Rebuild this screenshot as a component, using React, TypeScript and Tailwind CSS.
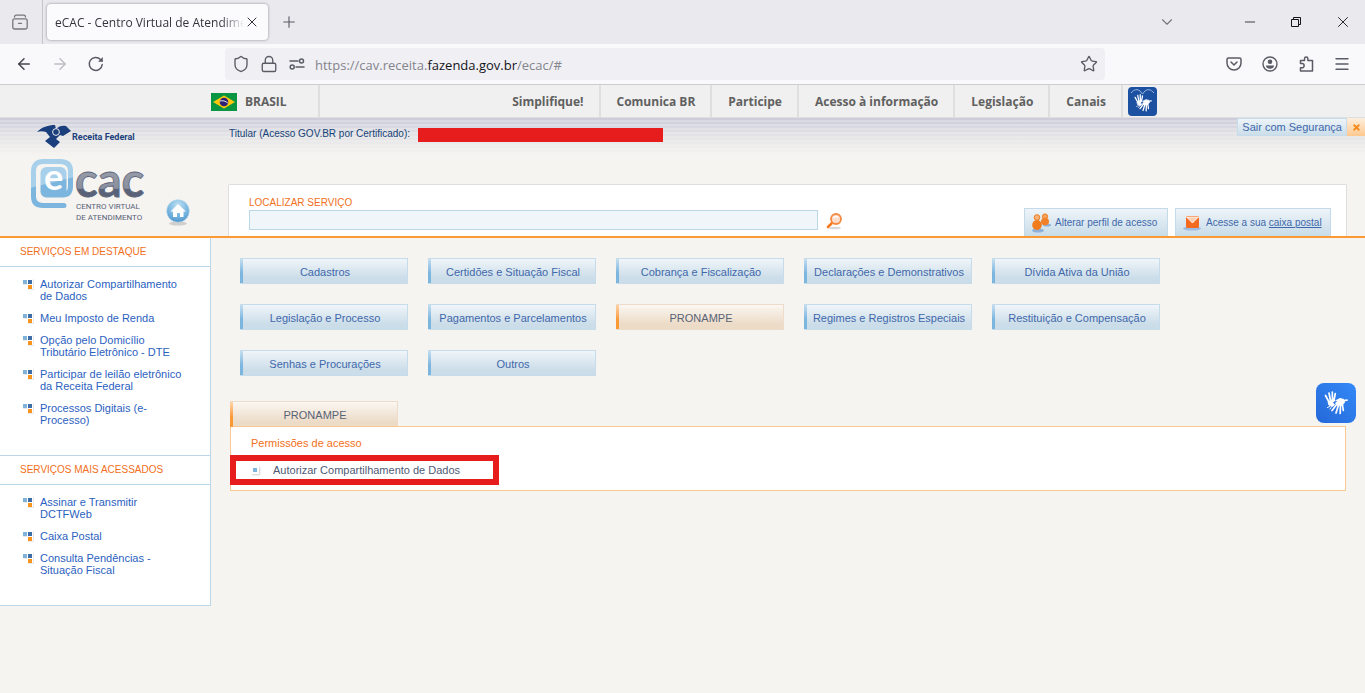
import {
  ArrowLeft,
  ArrowRight,
  ChevronDown,
  Lock,
  Menu,
  Minus,
  Plus,
  Shield,
  Star,
  X,
} from "lucide-react";

const govLinks = [
  "Simplifique!",
  "Comunica BR",
  "Participe",
  "Acesso à informação",
  "Legislação",
  "Canais",
];

const featured = [
  "Autorizar Compartilhamento de Dados",
  "Meu Imposto de Renda",
  "Opção pelo Domicílio Tributário Eletrônico - DTE",
  "Participar de leilão eletrônico da Receita Federal",
  "Processos Digitais (e-Processo)",
];

const mostUsed = [
  "Assinar e Transmitir DCTFWeb",
  "Caixa Postal",
  "Consulta Pendências - Situação Fiscal",
];

const categories = [
  "Cadastros",
  "Certidões e Situação Fiscal",
  "Cobrança e Fiscalização",
  "Declarações e Demonstrativos",
  "Dívida Ativa da União",
  "Legislação e Processo",
  "Pagamentos e Parcelamentos",
  "PRONAMPE",
  "Regimes e Registros Especiais",
  "Restituição e Compensação",
  "Senhas e Procurações",
  "Outros",
];

function LibrasHands({ className }: { className: string }) {
  return (
    <svg viewBox="0 0 24 24" className={className} fill="none" stroke="currentColor" strokeLinecap="round" strokeLinejoin="round">
      <path d="M4.500 10.500 10 8l.5 2-2 1.500 2 2.500-2.500 1.500L5 14z" fill="currentColor" strokeWidth="1" />
      <path d="M5 11 1.500 4.500M6.500 9.500 5 2M8.500 9 8.300 1M10 9.500l1.300-7" strokeWidth="1.700" />
      <path d="m12 9.500 4-2 4 1 .5 3-2.500 3-5-.5-1.500-2 3-1.500z" fill="currentColor" strokeWidth="1" />
      <path d="m20.500 9.500 2.500-.3M18.500 14l.8 5.500M16.500 14.500l-.3 8M14.500 14l-2.500 8M13 13l-5 6.500" strokeWidth="1.700" />
      <path d="m5.500 15.500-2 1M7 16.500l-1 1.500" strokeWidth="1" />
    </svg>
  );
}

function TabStrip() {
  return (
    <div className="flex h-11 items-center bg-[#eae9ee] text-[#5b5b66]">
      <div className="flex h-full w-[43px] items-center border-r border-[#c4c4ca] pl-3">
        <button aria-label="Firefox View">
          <svg viewBox="0 0 16 16" className="size-4 fill-none stroke-[#77777f] [stroke-width:1.3]" strokeLinecap="round">
            <path d="M2.500 3c0-1 .7-1.800 1.800-1.800h7.400c1.100 0 1.800.8 1.800 1.800M6.500 9.300h3" />
            <rect x=".8" y="4.800" width="14.400" height="10.200" rx="1.800" />
          </svg>
        </button>
      </div>
      <div className="ml-1 flex h-9 w-[221px] items-center rounded bg-[#fbfbfd] pl-2 pr-2 text-xs text-[#34343c] shadow-[0_0_3px_rgba(0,0,0,0.4)]">
        <span className="flex-1 overflow-hidden whitespace-nowrap pt-px [mask-image:linear-gradient(to_right,black_88%,transparent)]">
          eCAC - Centro Virtual de Atendimento
        </span>
        <button aria-label="Fechar aba">
          <X className="size-4" strokeWidth={1.5} />
        </button>
      </div>
      <button aria-label="Nova aba" className="ml-3">
        <Plus className="size-[18px]" strokeWidth={1.5} />
      </button>
      <div className="ml-auto flex items-center pr-[13px] text-[#15141a]">
        <button aria-label="Listar abas" className="mr-[66px] text-[#77777f]">
          <ChevronDown className="size-[18px]" strokeWidth={1.5} />
        </button>
        <button aria-label="Minimizar" className="mr-[30px]">
          <Minus className="size-4" strokeWidth={1.2} />
        </button>
        <button aria-label="Restaurar" className="mr-[30px]">
          <svg viewBox="0 0 16 16" className="size-4 fill-none stroke-current [stroke-width:1]">
            <path d="M3.500 5.500h7v7h-7zM5.500 5v-1.500h7v7H11" />
          </svg>
        </button>
        <button aria-label="Fechar">
          <X className="size-[18px]" strokeWidth={1.2} />
        </button>
      </div>
    </div>
  );
}

function Toolbar() {
  return (
    <div className="flex h-[41px] items-center border-b border-[#cccccf] bg-[#f9f9fb] pl-[15px] pr-[14px] text-[#5b5b66]">
      <button aria-label="Voltar" className="mr-[18px]">
        <ArrowLeft className="size-[18px] text-[#45454d]" strokeWidth={2} />
      </button>
      <button aria-label="Avançar" className="mr-[18px]">
        <ArrowRight className="size-[18px] text-[#bfbfc4]" strokeWidth={2} />
      </button>
      <button aria-label="Recarregar">
        <svg viewBox="0 0 18 18" className="size-[18px] fill-none stroke-[#5b5b66] [stroke-width:1.5]" strokeLinecap="round">
          <path d="M15.200 9.500A6.500 6.500 0 1 1 13.500 4.500l1.500 1.500" />
          <path d="M15.800 2v4.800H11z" fill="#5b5b66" stroke="none" />
        </svg>
      </button>
      <div className="ml-[120px] mr-[120px] flex h-8 flex-1 items-center rounded bg-[#f0f0f4] pl-[7px] pr-[7px]">
        <Shield className="size-[18px]" strokeWidth={1.8} />
        <Lock className="ml-[10px] size-[18px]" strokeWidth={1.8} />
        <svg viewBox="0 0 16 12" className="ml-[11px] h-3 w-4 fill-none stroke-current [stroke-width:1.5]" strokeLinecap="round">
          <path d="M1 3h8M7 9h8" />
          <circle cx="12.500" cy="3" r="2" />
          <circle cx="3.200" cy="9" r="2" />
        </svg>
        <span className="ml-[10px] flex-1 pt-[2px] text-[13px]/[18px] text-[#84848c]">
          https://cav.receita.<span className="text-[#15141a]">fazenda.gov.br</span>/ecac/#
        </span>
        <button aria-label="Favoritar">
          <Star className="size-[18px]" strokeWidth={1.8} />
        </button>
      </div>
      <div className="flex items-center gap-[18px]">
        <button aria-label="Pocket">
          <svg viewBox="0 0 18 18" className="size-[18px] fill-none stroke-current [stroke-width:1.5]" strokeLinecap="round" strokeLinejoin="round">
            <path d="M3.500 3h11a1.500 1.500 0 0 1 1.500 1.500V8A7 7 0 0 1 2 8V4.500A1.500 1.500 0 0 1 3.500 3z" />
            <path d="m6 7 3 3 3-3" />
          </svg>
        </button>
        <button aria-label="Conta">
          <svg viewBox="0 0 18 18" className="size-[18px]">
            <circle cx="9" cy="9" r="7" className="fill-none stroke-current [stroke-width:1.4]" />
            <circle cx="9" cy="6.800" r="2.300" fill="currentColor" />
            <path d="M4.800 10.500h8.400c-.3 2-2 3.300-4.200 3.300s-3.900-1.300-4.200-3.300z" fill="currentColor" />
          </svg>
        </button>
        <button aria-label="Extensões">
          <svg viewBox="0 0 18 18" className="size-[18px] fill-none stroke-current [stroke-width:1.5]" strokeLinejoin="round">
            <path d="M3.500 8.500V5.500h4V3.800a1.700 1.700 0 0 1 3.400 0v1.700H15.500V16H3.500v-3.200h1.500a2.100 2.100 0 0 0 0-4.300z" />
          </svg>
        </button>
        <button aria-label="Menu">
          <Menu className="size-[18px]" strokeWidth={1.8} />
        </button>
      </div>
    </div>
  );
}

function GovBar() {
  return (
    <div className="h-[33px] border-b border-[#dfdfdf] bg-[#f0f0f0] text-xs font-bold text-[#606060]">
      <div className="mx-auto flex h-full w-[949px] max-w-full items-center pl-[3px]">
        <a href="#" className="flex h-full w-[109px] items-center gap-2 border-r-2 border-[#dfdfdf] pt-px">
          <svg viewBox="0 0 26 18" className="h-[18px] w-[26px]">
            <rect width="26" height="18" fill="#0a9640" />
            <path d="M13 2.500 24 9l-11 6.500L2 9z" fill="#fdc70c" />
            <circle cx="13" cy="9" r="4.300" fill="#2b2275" />
            <path d="M9 8c3-.7 5.500 0 7.800 2" fill="none" stroke="#fff" strokeWidth=".9" />
          </svg>
          <span className="pt-px">BRASIL</span>
        </a>
        <nav className="ml-auto flex h-full">
          {govLinks.map((link) => (
            <a key={link} href="#" className="flex h-full items-center border-r-2 border-[#dfdfdf] pl-4 pr-[15px] pt-[2px]">
              {link}
            </a>
          ))}
        </nav>
        <a href="#" aria-label="VLibras" className="ml-[5px] flex size-[29px] flex-col items-center rounded bg-[#1c50a0] pt-px text-white">
          <svg viewBox="0 0 29 6" className="h-[6px] w-[29px] fill-none stroke-[#9db8de]">
            <path d="M3 5c3-4 7-4 9-2l2.500 3L17 3c2-2 6-2 9 2" />
          </svg>
          <LibrasHands className="size-[18px]" />
        </a>
      </div>
    </div>
  );
}

function Logo() {
  return (
    <div className="relative h-[118px] w-[228px] shrink-0">
      <svg viewBox="0 0 228 118" className="h-full w-full">
        <defs>
          <linearGradient id="gray" x1="0" y1="50" x2="0" y2="80" gradientUnits="userSpaceOnUse">
            <stop offset="0" stopColor="#9a9eaa" />
            <stop offset=".68" stopColor="#8a8f9e" />
            <stop offset=".7" stopColor="#596279" />
            <stop offset="1" stopColor="#596279" />
          </linearGradient>
          <linearGradient id="blue" x1="38" y1="42" x2="50" y2="90" gradientUnits="userSpaceOnUse">
            <stop offset="0" stopColor="#a9d0ea" />
            <stop offset=".5" stopColor="#a9d0ea" />
            <stop offset=".52" stopColor="#7cb5de" />
            <stop offset="1" stopColor="#7cb5de" />
          </linearGradient>
          <radialGradient id="ball" cx=".5" cy=".25" r=".8">
            <stop offset="0" stopColor="#bfe0f3" />
            <stop offset=".6" stopColor="#75b4df" />
            <stop offset="1" stopColor="#4c93c9" />
          </radialGradient>
        </defs>
        <path d="M37 14c5-5 11-7 18-7l1 4c3-3 6-4 10-3l5 5-8 5-3-1-4 4 4 3-6 6-9-7 5-4-4-5c-3-1-6-1-9 0z" fill="#1b3f7c" />
        <circle cx="56" cy="14" r="3.400" fill="#1b3f7c" stroke="#eeedf0" />
        <text x="72" y="22" fontSize="9" fontWeight="700" fill="#1b3f7c" fontFamily="Roboto, sans-serif">
          Receita Federal
        </text>
        <path d="M64 87.500H43c-6 0-9.500-3-9.500-9V53c0-6 3.500-9.500 9.500-9.500h17c7 0 10.500 3 10.500 9.500v15c0 6-3 9-8 9" fill="none" stroke="url(#blue)" strokeWidth="5" strokeLinecap="round" />
        <rect x="40.500" y="49" width="26" height="30.500" rx="6" fill="url(#blue)" />
        <text x="44" y="72" fontSize="36" fontWeight="700" fill="#fff" fontFamily="Lato, sans-serif">
          e
        </text>
        <text x="75" y="79" fontSize="47" fontWeight="700" fill="url(#gray)" stroke="#5f677c" strokeWidth=".8" fontFamily="Lato, sans-serif">
          cac
        </text>
        <g fontSize="8" fill="#596279" fontFamily="Roboto, sans-serif">
          <text x="76" y="91">CENTRO VIRTUAL</text>
          <text x="76" y="102">DE ATENDIMENTO</text>
        </g>
      </svg>
      <a href="#" aria-label="Início" className="absolute left-[166px] top-[81px]">
        <svg viewBox="0 0 26 28" className="h-7 w-[26px]">
          <ellipse cx="12" cy="24.500" rx="9" ry="2" fill="#000" opacity=".15" />
          <circle cx="12" cy="12" r="11.300" fill="url(#ball)" stroke="#b9d9ec" strokeWidth=".6" />
          <path d="m12 5-7.500 7.500H7V18h4v-4h3v4h3.500v-5.500H20z" fill="#fff" />
        </svg>
      </a>
    </div>
  );
}

function Header() {
  return (
    <header className="flex h-[120px] border-b-2 border-[#fb9a35] bg-[repeating-linear-gradient(to_bottom,rgba(246,244,240,0)_0px,rgba(246,244,240,0)_2px,rgba(246,244,240,0.3)_2px,rgba(246,244,240,0.3)_4px),linear-gradient(to_bottom,#cbcbda_0px,#e3e3e7_17px,#f5f4f1_38px)]">
      <Logo />
      <div className="flex min-w-0 flex-1 flex-col">
        <div className="flex h-[66px] items-start justify-between">
          <div className="mt-[9px] flex items-start text-[10px]/[13px] text-[#164377]">
            <span className="w-[190px] whitespace-nowrap pl-px">Titular (Acesso GOV.BR por Certificado):</span>
            <span className="mt-px h-[14px] w-[245px] bg-[#e71c1c]" />
          </div>
          <div className="flex h-[18px] items-stretch text-[11px] text-[#3f68aa]">
            <a href="#" className="flex items-center border border-[#c7dceb] bg-linear-to-b from-[#eef4f9] to-[#cbdeea] px-1">
              Sair com Segurança
            </a>
            <a href="#" aria-label="Sair" className="flex w-[18px] items-center justify-center bg-linear-to-b from-[#fdeedd] to-[#fdc98e] text-[#f68b1f]">
              <X className="size-[9px]" strokeWidth={5} />
            </a>
          </div>
        </div>
        <div className="mr-[18px] flex flex-1 items-end justify-between rounded-t-xs border border-b-0 border-[#dedede] bg-white pl-5 pr-[15px]">
          <form className="flex items-end pb-[6px]">
            <div className="flex flex-col">
              <label htmlFor="busca" className="text-[10px]/[14px] text-[#f26f21]">
                LOCALIZAR SERVIÇO
              </label>
              <input id="busca" className="h-5 w-[569px] border border-[#bcd7e9] bg-[#f0f5fa] px-1 text-xs outline-none" />
            </div>
            <button type="button" aria-label="Buscar" className="ml-2">
              <svg viewBox="0 0 18 18" className="size-[18px]">
                <ellipse cx="9" cy="16" rx="6" ry="1.300" fill="#000" opacity=".15" />
                <path d="m2 15 5-5" stroke="#f47b20" strokeWidth="2.600" strokeLinecap="round" />
                <circle cx="10" cy="7" r="5" fill="#fcdcca" stroke="#f58a42" strokeWidth="1.800" />
                <path d="M7.500 6c.5-1.500 3-2 4.500-.5" stroke="#fff" strokeWidth="1.500" fill="none" />
              </svg>
            </button>
          </form>
          <div className="flex gap-[7px] text-[10px] text-[#3f68aa]">
            <a href="#" className="flex h-7 w-36 items-center gap-1 border border-b-0 border-[#c5dae8] bg-linear-to-b from-[#eef4f9] to-[#c8dce9] pl-[6px]">
              <svg viewBox="0 0 20 20" className="size-5 shrink-0">
                <ellipse cx="7" cy="17.500" rx="6" ry="2" fill="#8fb0d8" />
                <ellipse cx="16" cy="12" rx="4" ry="1.500" fill="#8fb0d8" />
                <circle cx="14" cy="3.500" r="2.600" fill="#f6a35c" stroke="#ee7a1c" />
                <ellipse cx="14" cy="8.500" rx="4" ry="3.800" fill="#f0812a" />
                <circle cx="6" cy="4.500" r="2.800" fill="#f6b078" stroke="#ee7a1c" />
                <ellipse cx="6" cy="12" rx="4.800" ry="5" fill="#ef7b1d" />
              </svg>
              <span className="whitespace-nowrap">Alterar perfil de acesso</span>
            </a>
            <a href="#" className="flex h-7 w-[156px] items-center gap-1 border border-b-0 border-[#c5dae8] bg-linear-to-b from-[#eef4f9] to-[#c8dce9] pl-[6px]">
              <svg viewBox="0 0 20 20" className="size-5 shrink-0">
                <ellipse cx="10" cy="15.500" rx="9" ry="2" fill="#9dbbe0" />
                <rect x="4" y="3" width="13" height="12" rx="1.500" fill="#f36b21" />
                <path d="m4.500 4 6 6 6-6z" fill="#fbd0b5" stroke="#fff" strokeWidth=".8" />
              </svg>
              <span className="whitespace-nowrap">
                Acesse a sua <span className="underline">caixa postal</span>
              </span>
            </a>
          </div>
        </div>
      </div>
    </header>
  );
}

function ServiceList({ title, items }: { title: string; items: string[] }) {
  return (
    <section className="border-b border-[#bcd7e9]">
      <h2 className="border-b border-[#bcd7e9] pl-5 text-[10px]/[28px] text-[#f26f21]">{title}</h2>
      <ul className="flex flex-col gap-[10px] pb-[29px] pl-[23px] pr-[25px] pt-[11px]">
        {items.map((item) => (
          <li key={item} className="flex gap-[6px] text-[11px]/[12px] text-[#2b5fc0]">
            <svg viewBox="0 0 11 11" className="mt-px size-[11px] shrink-0" shapeRendering="crispEdges">
              <path d="M0 0h11v11H5V6H0z" fill="#e9e9e9" />
              <path d="M0 0h10v10H4V5H0z" fill="#fff" />
              <path d="M0 1h4v4H0z" fill="#7fb4dc" />
              <path d="M5 1h4v4H5z" fill="#3f6da8" />
              <path d="M5 6h4v4H5z" fill="#f7941d" />
            </svg>
            <a href="#">{item}</a>
          </li>
        ))}
      </ul>
    </section>
  );
}

export default function App() {
  return (
    <div className="relative min-h-screen bg-[#f6f4f0] font-['Liberation_Sans',Arial,sans-serif]">
      <div className="font-['Open_Sans',sans-serif]">
        <TabStrip />
        <Toolbar />
        <GovBar />
      </div>
      <Header />
      <div className="flex items-start">
        <aside className="w-[211px] shrink-0 border-r border-[#bcd7e9] bg-white">
          <ServiceList title="SERVIÇOS EM DESTAQUE" items={featured} />
          <ServiceList title="SERVIÇOS MAIS ACESSADOS" items={mostUsed} />
        </aside>
        <main className="min-w-0 flex-1 pl-[19px] pr-[19px] pt-5">
          <nav className="ml-[10px] flex max-w-[1000px] flex-wrap gap-5 text-[11px]">
            {categories.map((category) =>
              category === "PRONAMPE" ? (
                <button
                  key={category}
                  className="flex h-[26px] w-[168px] border border-l-0 border-[#ecdcc9] bg-linear-to-b from-[#fbf7f2] to-[#ecdbc7] to-80% text-[#5a6275]"
                >
                  <span className="h-full w-[3px] bg-linear-to-b from-[#fdd3a5] to-[#fb9a35] to-60%" />
                  <span className="flex-1 self-center pt-[2px]">{category}</span>
                </button>
              ) : (
                <button
                  key={category}
                  className="flex h-[26px] w-[168px] border border-l-0 border-[#c7dcea] bg-linear-to-b from-[#f0f5f9] to-[#cbdde9] to-80% text-[#3f68aa]"
                >
                  <span className="h-full w-[3px] bg-linear-to-b from-[#c3def0] to-[#7cb5de] to-60%" />
                  <span className="flex-1 self-center pt-[2px]">{category}</span>
                </button>
              ),
            )}
          </nav>
          <h2 className="mt-[25px] flex h-[26px] w-[168px] border border-b-0 border-l-0 border-[#ecdcc9] bg-linear-to-b from-[#fbf7f2] to-[#ecdbc7] to-80% text-[11px] text-[#5a6275]">
            <span className="h-full w-[3px] bg-linear-to-b from-[#fdd3a5] to-[#fb9a35] to-60%" />
            <span className="flex-1 self-center pt-[2px] text-center">PRONAMPE</span>
          </h2>
          <section className="-mt-px border border-[#fbc98f] bg-white pb-[5px] pt-[9px]">
            <h3 className="pl-5 text-[11px]/[14px] text-[#f26f21]">Permissões de acesso</h3>
            <div className="-ml-px mt-[5px] flex h-[30px] w-[269px] items-center border-6 border-[#e71c1c] pl-[15px] text-[11px]/[18px] text-[#4f5a75]">
              <span className="size-2 border-2 border-white bg-[#7cb5de] shadow-[1px_1px_2px_rgba(0,0,0,0.2)]" />
              <a href="#" className="ml-[14px] whitespace-nowrap">
                Autorizar Compartilhamento de Dados
              </a>
            </div>
          </section>
        </main>
      </div>
      <button
        aria-label="VLibras"
        className="absolute right-[9px] top-[383px] flex size-10 items-center justify-center rounded-lg bg-linear-to-tr from-[#2568d8] to-[#3489f8] text-white"
      >
        <LibrasHands className="size-6" />
      </button>
    </div>
  );
}
